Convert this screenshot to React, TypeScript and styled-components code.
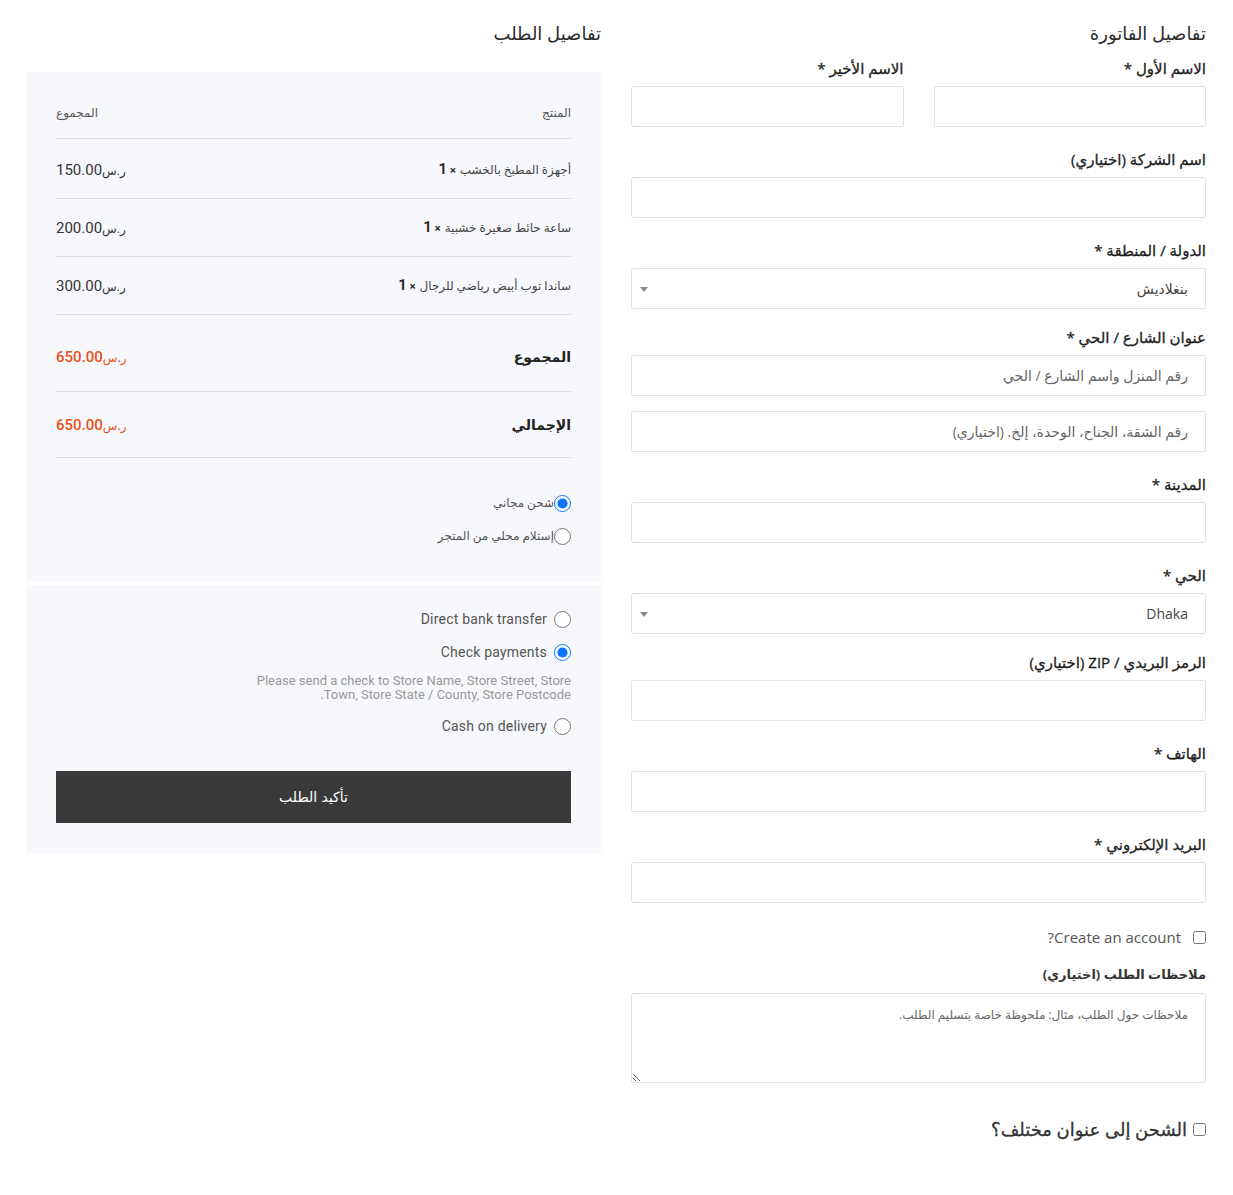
import React from "react";
import styled, { createGlobalStyle } from "styled-components";

const GlobalStyle = createGlobalStyle`
  body {
    margin: 0;
    background: #ffffff;
    font-family: "Open Sans", "DejaVu Sans", sans-serif;
  }
  * { box-sizing: border-box; }
`;

const Page = styled.div`
  direction: rtl;
  width: 1180px;
  margin: 0 27px 0 26px;
  padding: 20px 0 40px;
  display: grid;
  grid-template-columns: 575px 575px;
  column-gap: 30px;
  align-items: start;
`;

const Column = styled.section`
  display: flex;
  flex-direction: column;
`;

const Heading = styled.h3<{ $gap: number }>`
  margin: 0 0 ${(p) => p.$gap}px;
  font-size: 18px;
  line-height: 26px;
  font-weight: 500;
  color: #2b2b2b;
`;

const Row = styled.div`
  display: grid;
  grid-template-columns: 1fr 1fr;
  column-gap: 30px;
`;

const Field = styled.div<{ $mb?: number }>`
  display: flex;
  flex-direction: column;
  margin-bottom: ${(p) => (p.$mb ?? 22)}px;
`;

const Label = styled.label`
  font-size: 15px;
  line-height: 20px;
  font-weight: 400;
  color: #1e1e1e;
  -webkit-text-stroke: 0.3px #1e1e1e;
  margin-bottom: 8px;
`;

const Input = styled.input`
  height: 41px;
  border: 1px solid #e3e3e3;
  border-radius: 2px;
  padding: 0 17px;
  font-family: inherit;
  font-size: 14px;
  color: #444;
  background: #fff;
  outline: none;
  &::placeholder {
    color: #666;
  }
`;

const SelectBox = styled.div`
  height: 41px;
  border: 1px solid #e3e3e3;
  border-radius: 2px;
  padding: 0 17px 0 8px;
  display: flex;
  align-items: center;
  justify-content: space-between;
  font-size: 14px;
  color: #444;
  background: #fff;
`;

const Arrow = styled.span`
  width: 0;
  height: 0;
  border-left: 4px solid transparent;
  border-right: 4px solid transparent;
  border-top: 5px solid #888;
  margin-top: 2px;
`;

const CheckRow = styled.label<{ $size: number; $gap: number }>`
  display: flex;
  align-items: center;
  gap: ${(p) => p.$gap}px;
  font-size: ${(p) => p.$size}px;
  line-height: 20px;
  color: #555;
`;

const Check = styled.input`
  margin: 0;
  width: 13px;
  height: 13px;
`;

const NotesLabel = styled.label`
  margin-top: 17px;
  font-size: 13px;
  line-height: 20px;
  font-weight: 700;
  color: #333;
  margin-bottom: 9px;
`;

const Notes = styled.textarea`
  height: 90px;
  border: 1px solid #e3e3e3;
  border-radius: 2px;
  padding: 12px 17px;
  font-family: inherit;
  font-size: 12px;
  color: #444;
  resize: vertical;
  outline: none;
  &::placeholder {
    color: #666;
  }
`;

const ShipTitle = styled.label`
  margin-top: 33px;
  display: flex;
  align-items: center;
  gap: 6px;
  font-size: 18px;
  line-height: 26px;
  font-weight: 500;
  color: #333;
  -webkit-text-stroke: 0.3px #333;
`;

/* order side */

const Panel = styled.div<{ $pt: number; $pb: number }>`
  background: #f7f8fb;
  padding: ${(p) => p.$pt}px 30px ${(p) => p.$pb}px;
  margin-bottom: 4px;
  font-family: "Roboto", "DejaVu Sans", sans-serif;
`;

const TableRow = styled.div<{ $h: number; $pt?: number }>`
  height: ${(p) => p.$h}px;
  padding-top: ${(p) => p.$pt ?? 0}px;
  display: flex;
  justify-content: space-between;
  align-items: center;
  line-height: 20px;
  border-bottom: 1px solid #dcdde0;
`;

const HeadCell = styled.span`
  font-size: 12px;
  color: #555;
`;

const ProductName = styled.span`
  font-size: 12px;
  color: #444;
  display: flex;
  align-items: center;
  gap: 4px;
  height: 20px;
`;

const Qty = styled.span`
  font-size: 15px;
  font-weight: 600;
  color: #222;
  small {
    font-size: 11px;
    margin-left: 3px;
  }
`;

const Price = styled.span<{ $accent?: boolean }>`
  direction: ltr;
  display: inline-flex;
  align-items: baseline;
  height: 20px;
  font-size: 15px;
  font-weight: ${(p) => (p.$accent ? 500 : 400)};
  color: ${(p) => (p.$accent ? "#e8501c" : "#333")};
  small {
    font-size: 12px;
    line-height: 1;
  }
`;

const SumLabel = styled.span`
  font-size: 14px;
  font-weight: 700;
  color: #222;
`;

const Options = styled.div<{ $mt: number; $gap: number }>`
  display: flex;
  flex-direction: column;
  gap: ${(p) => p.$gap}px;
  margin-top: ${(p) => p.$mt}px;
`;

const Option = styled.label<{ $gap: number; $size: number }>`
  display: flex;
  align-items: center;
  gap: ${(p) => p.$gap}px;
  font-size: ${(p) => p.$size}px;
  line-height: 20px;
  height: 20px;
  color: #555;
  letter-spacing: 0.2px;
`;

const Radio = styled.input`
  margin: 0;
  width: 17px;
  height: 17px;
  accent-color: #0a74ff;
`;

const Description = styled.p`
  margin: -1px 0 1px;
  font-size: 13px;
  line-height: 14px;
  color: #999;
`;

const SubmitButton = styled.button`
  margin-top: 35px;
  width: 100%;
  height: 52px;
  border: none;
  background: #3a3a3a;
  color: #fff;
  font-family: "DejaVu Sans", sans-serif;
  font-size: 14px;
  cursor: pointer;
`;

const items = [
  { name: "أجهزة المطبخ بالخشب", price: "150.00", h: 60, pt: 3 },
  { name: "ساعة حائط صغيرة خشبية", price: "200.00", h: 58, pt: 0 },
  { name: "ساندا توب أبيض رياضي للرجال", price: "300.00", h: 58, pt: 0 },
];

function Money({ value, accent }: { value: string; accent?: boolean }) {
  return (
    <Price $accent={accent}>
      {value}
      <small>ر.س</small>
    </Price>
  );
}

export default function App() {
  return (
    <>
      <GlobalStyle />
      <Page>
        <Column>
          <Heading $gap={12}>تفاصيل الفاتورة</Heading>
          <Row>
            <Field>
              <Label>الاسم الأول *</Label>
              <Input />
            </Field>
            <Field>
              <Label>الاسم الأخير *</Label>
              <Input />
            </Field>
          </Row>
          <Field>
            <Label>اسم الشركة (اختياري)</Label>
            <Input />
          </Field>
          <Field $mb={18}>
            <Label>الدولة / المنطقة *</Label>
            <SelectBox>
              <span>بنغلاديش</span>
              <Arrow />
            </SelectBox>
          </Field>
          <Field $mb={15}>
            <Label>عنوان الشارع / الحي *</Label>
            <Input placeholder="رقم المنزل واسم الشارع / الحي" />
          </Field>
          <Field>
            <Input placeholder="رقم الشقة، الجناح، الوحدة، إلخ. (اختياري)" />
          </Field>
          <Field>
            <Label>المدينة *</Label>
            <Input />
          </Field>
          <Field $mb={18}>
            <Label>الحي *</Label>
            <SelectBox>
              <span>Dhaka</span>
              <Arrow />
            </SelectBox>
          </Field>
          <Field>
            <Label>الرمز البريدي / ZIP (اختياري)</Label>
            <Input />
          </Field>
          <Field>
            <Label>الهاتف *</Label>
            <Input />
          </Field>
          <Field $mb={24}>
            <Label>البريد الإلكتروني *</Label>
            <Input />
          </Field>
          <CheckRow $size={15} $gap={12}>
            <Check type="checkbox" />
            Create an account?
          </CheckRow>
          <NotesLabel>ملاحظات الطلب (اختياري)</NotesLabel>
          <Notes placeholder="ملاحظات حول الطلب، مثال: ملحوظة خاصة بتسليم الطلب." />
          <ShipTitle>
            <Check type="checkbox" />
            الشحن إلى عنوان مختلف؟
          </ShipTitle>
        </Column>

        <Column>
          <Heading $gap={26}>تفاصيل الطلب</Heading>
          <Panel $pt={16} $pb={35}>
            <TableRow $h={51}>
              <HeadCell>المنتج</HeadCell>
              <HeadCell>المجموع</HeadCell>
            </TableRow>
            {items.map((item) => (
              <TableRow key={item.name} $h={item.h} $pt={item.pt}>
                <ProductName>
                  {item.name}
                  <Qty>
                    <small>×</small>1
                  </Qty>
                </ProductName>
                <Money value={item.price} />
              </TableRow>
            ))}
            <TableRow $h={77} $pt={8}>
              <SumLabel>المجموع</SumLabel>
              <Money value="650.00" accent />
            </TableRow>
            <TableRow $h={66}>
              <SumLabel>الإجمالي</SumLabel>
              <Money value="650.00" accent />
            </TableRow>
            <Options $mt={35} $gap={13}>
              <Option $gap={0} $size={12}>
                <Radio type="radio" name="shipping" defaultChecked />
                شحن مجاني
              </Option>
              <Option $gap={0} $size={12}>
                <Radio type="radio" name="shipping" />
                إستلام محلي من المتجر
              </Option>
            </Options>
          </Panel>
          <Panel $pt={24} $pb={30}>
            <Options $mt={0} $gap={13}>
              <Option $gap={7} $size={14}>
                <Radio type="radio" name="payment" />
                Direct bank transfer
              </Option>
              <Option $gap={7} $size={14}>
                <Radio type="radio" name="payment" defaultChecked />
                Check payments
              </Option>
              <Description>
                Please send a check to Store Name, Store Street, Store
                <br />
                Town, Store State / County, Store Postcode.
              </Description>
              <Option $gap={7} $size={14}>
                <Radio type="radio" name="payment" />
                Cash on delivery
              </Option>
            </Options>
            <SubmitButton type="button">تأكيد الطلب</SubmitButton>
          </Panel>
        </Column>
      </Page>
    </>
  );
}
